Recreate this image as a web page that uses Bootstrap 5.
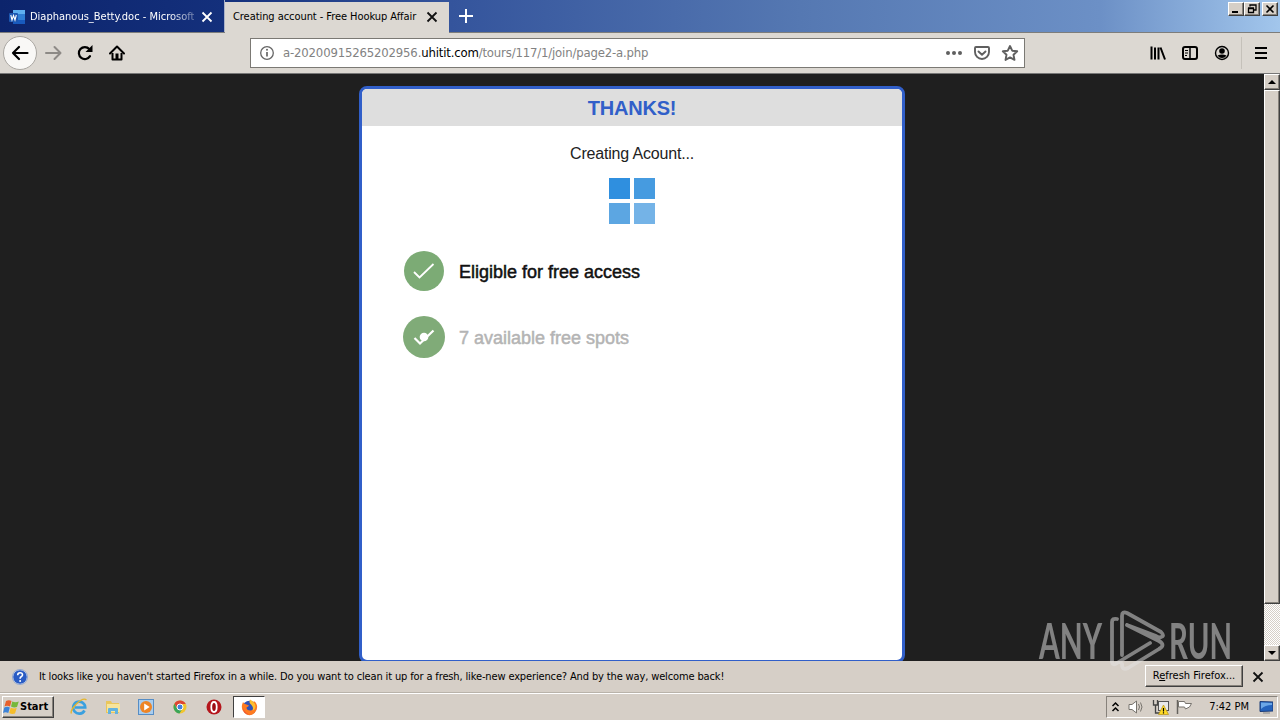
<!DOCTYPE html>
<html lang="en">
<head>
    <meta charset="UTF-8">
    <meta name="viewport" content="width=device-width, initial-scale=1.0">
    <link href="https://cdn.jsdelivr.net/npm/bootstrap@5.3.3/dist/css/bootstrap.min.css" rel="stylesheet">
    <title>Creating account - Free Hookup Affair</title>
    <style>
        body {
            width: 1280px;
            height: 720px;
            font-family: "DejaVu Sans Condensed", "DejaVu Sans", sans-serif;
            font-stretch: condensed;
            font-size: 11px;
            line-height: 14px;
            color: #000;
            background: #d6cfc7;
        }

        svg {
            display: block;
            flex: none;
        }

        /* Title bar and tabs */
        .titlebar {
            height: 33px;
            background: linear-gradient(90deg, #0c246c 0, #14307c 225px, #34549c 450px, #5578b2 800px, #6c90c6 1100px, #a2c6ec 1280px);
            border-bottom: 1px solid #7d7d7b;
        }

        .tab-word {
            width: 225px;
            padding: 2px 11px 0 9px;
            color: #fff;
            border-right: 1px solid #aab2c8;
        }

        .tab-word .tab-text {
            width: 164px;
            margin-left: 5px;
            letter-spacing: 0;
            -webkit-mask-image: linear-gradient(90deg, #000 85%, rgba(0, 0, 0, .35));
        }

        .tab-open {
            width: 224px;
            height: 31px;
            margin-top: 2px;
            margin-bottom: -1px;
            padding: 0 11px 2px 8px;
            background: #dcd8d2;
        }

        .tab-text {
            letter-spacing: -.06px;
        }

        .bevel {
            background: #d6cfc7;
            border: 1px solid;
            border-color: #fff #404040 #404040 #fff;
            box-shadow: inset -1px -1px #87827b;
        }

        .win-group {
            margin: 2px 2px 0 0;
        }

        .win-btn {
            width: 16px;
            height: 14px;
        }

        .win-close {
            margin-left: 2px;
        }

        /* Toolbar */
        .toolbar {
            height: 41px;
            background: #dcd8d2;
            border-bottom: 1px solid #777;
        }

        .back-btn {
            width: 34px;
            height: 34px;
            margin-left: 3px;
            border: 1px solid #aaa7a2;
            background: #f9f8f6;
        }

        .reload {
            margin: 0 16px 0 14px;
        }

        .urlbar {
            width: 775px;
            height: 30px;
            margin-left: 125px;
            border: 1px solid #7b7974;
            background: #fff;
            color: #828282;
            font-size: 13px;
        }

        .url-text {
            letter-spacing: -.17px;
        }

        .pocket {
            margin: 0 6px 0 7px;
        }

        .divider {
            width: 1px;
            height: 32px;
            margin-left: 3px;
            background: #c5c1ba;
        }

        /* Page */
        .page {
            background: #1f1f1f;
            font-family: "Liberation Sans", Arial, sans-serif;
        }

        .panel {
            width: 546px;
            height: 577px;
            margin-top: 12px;
            border: 3px solid #315fc9;
            border-radius: 8px;
            background: #fff;
        }

        .panel-head {
            height: 37px;
            border-radius: 5px 5px 0 0;
            background: #dedede;
            color: #315fc9;
            font-size: 20px;
            font-weight: bold;
            letter-spacing: -.2px;
        }

        .creating {
            margin-top: 18px;
            color: #222;
            font-size: 16px;
            line-height: 20px;
            letter-spacing: -.18px;
        }

        .loader {
            margin: 14px auto 0;
        }

        .steps {
            margin: 26px 0 0 41px;
            gap: 24px;
        }

        .step-text {
            margin-left: 14px;
            padding-top: 2px;
            color: #111;
            font-size: 18px;
            line-height: 22px;
            -webkit-text-stroke: .5px;
        }

        .step-pending {
            color: #b4b4b4;
        }

        .scroll {
            width: 16px;
            background: repeating-conic-gradient(#fff 0 25%, #d6cfc7 0 50%) 0 0 / 2px 2px;
        }

        .scroll-btn {
            height: 16px;
        }

        .scroll-thumb {
            height: 514px;
        }

        .watermark {
            position: absolute;
            left: 1036px;
            top: 606px;
            opacity: .5;
        }

        /* Notification bar */
        .notice {
            height: 32px;
            border-bottom: 1px solid #b9b3aa;
            padding: 0 15px 0 12px;
        }

        .notice-text {
            letter-spacing: -.137px;
        }

        .notice-msg {
            margin-left: 11px;
            padding-top: 1px;
        }

        .refresh-btn {
            width: 98px;
            height: 22px;
            margin-bottom: 2px;
        }

        /* Taskbar */
        .taskbar {
            height: 27px;
            border-top: 1px solid #fff;
        }

        .start-btn {
            width: 52px;
            height: 22px;
            margin-left: 2px;
            font-weight: bold;
        }

        .quick-icons {
            gap: 17px;
        }

        .task-active {
            width: 32px;
            height: 22px;
            margin-left: 11px;
            background: #fff;
            border: 1px solid;
            border-color: #404040 #fff #fff #404040;
        }

        .tray {
            width: 172px;
            height: 22px;
            margin-right: 2px;
            border: 1px solid;
            border-color: #87827b #fff #fff #87827b;
        }
    </style>
</head>
<body class="d-flex flex-column overflow-hidden position-relative">
    <div class="titlebar d-flex flex-shrink-0">
        <div class="tab-word d-flex align-items-center">
            <svg width="16" height="16" viewBox="0 0 16 16">
                <rect x="4" y="1" width="12" height="14" rx="1" fill="#2f7fd4"/>
                <path d="M4 1h12v4H4z" fill="#5eb0f0"/>
                <path d="M4 11h12v4H4z" fill="#185abd"/>
                <rect y="4" width="9" height="9" rx="1" fill="#1c57b0"/>
                <path d="M1.800 6l1.200 5 1.500-4.500L6 11l1.300-5" fill="none" stroke="#fff" stroke-width="1.100"/>
            </svg>
            <div class="tab-text text-nowrap overflow-hidden">Diaphanous_Betty.doc - Microsoft</div>
            <svg class="ms-auto" width="12" height="12" viewBox="0 0 12 12"><path d="M1.500 1.500l9 9M10.500 1.500l-9 9" stroke="#fff" stroke-width="1.800"/></svg>
        </div>
        <div class="tab-open d-flex align-items-center">
            <div class="tab-text text-nowrap">Creating account - Free Hookup Affair</div>
            <svg class="ms-auto" width="12" height="12" viewBox="0 0 12 12"><path d="M1.500 1.500l9 9M10.500 1.500l-9 9" stroke="#111" stroke-width="1.800"/></svg>
        </div>
        <svg class="ms-2 mt-2" width="17" height="16" viewBox="0 0 17 16"><path d="M9 1v14M2 8h14" stroke="#fff" stroke-width="2"/></svg>
        <div class="win-group d-flex ms-auto">
            <div class="win-btn bevel"><svg width="14" height="12"><path d="M3 9h6" stroke="#000" stroke-width="2"/></svg></div>
            <div class="win-btn bevel"><svg width="14" height="12"><path d="M5 3.500V2h6v5H9M3.500 5.500h5v4h-5zM3 5h6M5 2h6" fill="none" stroke="#000" stroke-width="1.300"/></svg></div>
            <div class="win-btn win-close bevel"><svg width="14" height="12"><path d="M3.500 2.500l7 7M10.500 2.500l-7 7" stroke="#000" stroke-width="1.600"/></svg></div>
        </div>
    </div>

    <div class="toolbar d-flex align-items-center flex-shrink-0">
        <div class="back-btn rounded-circle d-flex align-items-center justify-content-center">
            <svg width="18" height="16" viewBox="0 0 18 16"><path d="M16.500 8H2M8 2L2 8l6 6" fill="none" stroke="#000" stroke-width="2.200" stroke-linecap="round" stroke-linejoin="round"/></svg>
        </div>
        <svg class="ms-2" width="18" height="16" viewBox="0 0 18 16"><path d="M1 8h14M9.500 2l6 6-6 6" fill="none" stroke="#8d8a86" stroke-width="2" stroke-linecap="round" stroke-linejoin="round"/></svg>
        <svg class="reload" width="16" height="16" viewBox="0 0 16 16"><path d="M13 11.200A6 6 0 1 1 12.300 4" fill="none" stroke="#000" stroke-width="2.200" stroke-linecap="round"/><path d="M15.500 0v7H8.500z" fill="#000"/></svg>
        <svg width="16" height="16" viewBox="0 0 16 16"><path d="M1 8.500L8 1.500l7 7" fill="none" stroke="#000" stroke-width="2" stroke-linecap="round" stroke-linejoin="round"/><path d="M3.500 8v6.500h9V8" fill="none" stroke="#000" stroke-width="2" stroke-linejoin="round"/><path d="M6.500 14.500V8.500h3v6z" fill="#000"/></svg>
        <div class="urlbar d-flex align-items-center">
            <svg class="ms-2" width="16" height="16" viewBox="0 0 16 16"><circle cx="8" cy="8" r="6.300" fill="none" stroke="#666" stroke-width="1.300"/><path d="M8 7v4.500" stroke="#666" stroke-width="1.700"/><circle cx="8" cy="4.800" r="1" fill="#666"/></svg>
            <div class="url-text text-nowrap ms-2">a-20200915265202956.<span class="text-black">uhitit.com</span>/tours/117/1/join/page2-a.php</div>
            <svg class="ms-auto" width="18" height="16" viewBox="0 0 18 16" fill="#5f5f5f"><circle cx="3" cy="8" r="2"/><circle cx="9" cy="8" r="2"/><circle cx="15" cy="8" r="2"/></svg>
            <svg class="pocket" width="24" height="16" viewBox="0 0 24 16" fill="none" stroke="#5f5f5f" stroke-width="1.900" stroke-linecap="round" stroke-linejoin="round"><path d="M6 2h12q1 0 1 1v4a7 7 0 0 1-14 0V3q0-1 1-1zM8.500 6.500L12 9.800l3.500-3.300"/></svg>
            <svg class="me-1" width="20" height="18" viewBox="0 0 20 18"><path d="M10 2l2.200 4.700 5 .6-3.700 3.500 1 5.100L10 13.400l-4.500 2.500 1-5.100L2.800 7.300l5-.6z" fill="none" stroke="#5f5f5f" stroke-width="1.900" stroke-linejoin="round"/></svg>
        </div>
        <div class="d-flex align-items-center gap-3 ms-auto me-2">
            <svg width="16" height="16" viewBox="0 0 16 16"><path d="M1.500 1.500v13M5 2.500v12M8.500 2.500v12M10.500 2.500l4.500 12" stroke="#000" stroke-width="2"/></svg>
            <svg width="16" height="16" viewBox="0 0 16 16"><rect x="1" y="2" width="14" height="12" rx="2" fill="none" stroke="#000" stroke-width="2"/><path d="M8 2v12" stroke="#000" stroke-width="1.500"/><path d="M3 5.500h3M3 8h3M3 10.500h2" stroke="#000"/></svg>
            <svg width="16" height="16" viewBox="0 0 16 16"><circle cx="8" cy="8" r="6.500" fill="none" stroke="#000" stroke-width="1.400"/><circle cx="8" cy="6" r="2.800"/><path d="M3.500 10.500q4.500-2 9 0Q11 13 8 13t-4.500-2.500z"/></svg>
        </div>
        <div class="divider"></div>
        <svg class="mx-2" width="22" height="16" viewBox="0 0 22 16"><path d="M5 3h12M5 8h12M5 13h12" stroke="#000" stroke-width="2"/></svg>
    </div>

    <div class="page d-flex flex-grow-1 overflow-hidden">
        <div class="flex-grow-1 d-flex justify-content-center">
            <div class="panel flex-shrink-0">
                <div class="panel-head d-flex align-items-center justify-content-center">THANKS!</div>
                <div class="creating text-center">Creating Acount...</div>
                <svg class="loader" width="46" height="46"><path d="M0 0h21v21H0z" fill="#2f8fdf"/><path d="M25 0h21v21H25z" fill="#469be0"/><path d="M0 25h21v21H0z" fill="#5ca6e2"/><path d="M25 25h21v21H25z" fill="#74b3e7"/></svg>
                <div class="steps d-flex flex-column">
                    <div class="d-flex align-items-center">
                        <svg width="42" height="42"><circle cx="21" cy="21" r="20" fill="#7cab75"/><path d="M11 22l5.500 5.500L30.500 14" fill="none" stroke="#fff" stroke-width="1.800"/></svg>
                        <div class="step-text">Eligible for free access</div>
                    </div>
                    <div class="d-flex align-items-center">
                        <svg width="42" height="42"><circle cx="21" cy="21" r="21" fill="#80ab78"/><path d="M11.500 22l5.500 5.500L30.500 14.500" fill="none" stroke="#fff" stroke-width="2.200"/><circle cx="21" cy="21" r="4.300" fill="#fff"/></svg>
                        <div class="step-text step-pending">7 available free spots</div>
                    </div>
                </div>
            </div>
        </div>
        <div class="scroll d-flex flex-column">
            <div class="scroll-btn bevel"><svg width="14" height="14"><path d="M3 9h8L7 5z"/></svg></div>
            <div class="scroll-thumb bevel"></div>
            <div class="scroll-btn bevel mt-auto"><svg width="14" height="14"><path d="M3 5h8L7 9z"/></svg></div>
        </div>
    </div>

    <div class="notice d-flex align-items-center flex-shrink-0">
        <svg width="16" height="16" viewBox="0 0 16 16"><circle cx="8" cy="8" r="7.300" fill="#2a5cc4" stroke="#dfe8f8"/><circle cx="8" cy="8" r="7.600" fill="none" stroke="#7d94bf" stroke-width=".7"/><path d="M5.700 6.200q0-2.500 2.400-2.500t2.400 2.200q0 1-1.400 1.900-1 .6-1 1.900" fill="none" stroke="#fff" stroke-width="1.600"/><circle cx="8.100" cy="11.900" r="1" fill="#fff"/></svg>
        <div class="notice-text notice-msg text-nowrap">It looks like you haven't started Firefox in a while. Do you want to clean it up for a fresh, like-new experience? And by the way, welcome back!</div>
        <div class="refresh-btn bevel ms-auto d-flex align-items-center justify-content-center"><span>R<u>e</u>fresh Firefox...</span></div>
        <svg class="ms-2" width="14" height="12" viewBox="0 0 14 12"><path d="M2.500 1.500l9 9M11.500 1.500l-9 9" stroke="#111" stroke-width="1.800"/></svg>
    </div>

    <div class="taskbar d-flex align-items-center flex-shrink-0">
        <div class="start-btn bevel d-flex align-items-center">
            <svg width="17" height="16" viewBox="0 0 17 16"><path d="M3 2q3-1.500 5.500 0L7 7.500q-3-1.500-5.500 0z" fill="#e8602c"/><path d="M9.300 2.500q3 1.500 6.500 0L14 8q-3 1-6-.5z" fill="#76b83c"/><path d="M1.300 8.500q3-1.300 5.500 0L5.300 14q-2.800-1.300-5.300 0z" fill="#3d83d8"/><path d="M7.700 8.800q3 1.300 6 .3L12 14.500q-3 1-5.800-.5z" fill="#f5bd2c"/></svg>
            <span>Start</span>
        </div>
        <div class="quick-icons d-flex align-items-center ms-3">
            <svg width="18" height="18" viewBox="0 0 18 18"><path d="M14.500 12.500A6 6 0 1 1 15.200 9.500H5" fill="none" stroke="#3aa0df" stroke-width="2.700"/><path d="M1.500 15.500C-1 12 12-2 16.500 2" fill="none" stroke="#e5b52c" stroke-width="1.300"/></svg>
            <svg width="16" height="18" viewBox="0 0 16 18"><path d="M1 3h5l1 2h7v10H1z" fill="#e9c65c"/><path d="M2 6h13v8H2z" fill="#f6e49b"/><path d="M3 16v-5q0-1 1-1h8q1 0 1 1v5h-3v-3H6v3z" fill="#63b3df"/></svg>
            <svg width="16" height="18" viewBox="0 0 16 18"><rect x=".5" y="1.500" width="15" height="15" fill="#a9cdee" stroke="#568dc5"/><circle cx="8" cy="9" r="6" fill="#ee8526"/><path d="M6.200 5.500v7l5.500-3.500z" fill="#fff"/></svg>
            <svg width="18" height="18" viewBox="0 0 18 18"><circle cx="9" cy="9" r="6.500" fill="#f2c52d"/><path d="M3.400 5.700A6.500 6.500 0 0 1 14.800 6H9L6 10.500z" fill="#dd4634"/><path d="M3.400 5.700A6.500 6.500 0 0 0 8.500 15.500l3-5H6z" fill="#3ba558"/><circle cx="9" cy="9" r="3" fill="#4281dd" stroke="#fff"/></svg>
            <svg width="16" height="18" viewBox="0 0 16 18"><circle cx="8" cy="9" r="7.500" fill="#b5161c"/><ellipse cx="8" cy="9" rx="2.700" ry="5" fill="#9c0b12" stroke="#fff" stroke-width="1.800"/></svg>
        </div>
        <div class="task-active d-flex align-items-center justify-content-center">
            <svg width="17" height="17" viewBox="0 0 17 17"><circle cx="8.500" cy="8.800" r="7" fill="#3153b7"/><path d="M2 3q-3 7 1.500 11 5 4.500 10 0 4-4.500 2-9-1-2.500-3-3 1 3 0 5 1 4-3 4.500-4 0-4-3 2-1 2.500-2L5.500 5.500Q3 5 2 3z" fill="#ff7b20"/><path d="M9 .500q-1.500 3 1 5 3 3 1.500 6 3-1 3-4 0-4-5.500-7z" fill="#ffbf2d"/><path d="M2 9q1 7 8 6.500-6-.500-8-6.500z" fill="#ec3f3f"/></svg>
        </div>
        <div class="tray ms-auto d-flex align-items-center">
            <svg class="ms-1" width="9" height="12" viewBox="0 0 9 12"><path d="M1.500 5l3-3 3 3M1.500 10l3-3 3 3" fill="none" stroke="#000" stroke-width="1.500"/></svg>
            <svg class="ms-2" width="18" height="16" viewBox="0 0 18 16"><path d="M1 5.500h3L8.500 2v12L4 10.500H1z" fill="#fff" stroke="#77736d"/><path d="M10.500 5q2 3 0 6M12.500 3.500q3 4.500 0 9" fill="none" stroke="#77736d"/></svg>
            <svg class="ms-1" width="20" height="16" viewBox="0 0 20 16"><rect x="8.500" y="2.500" width="10" height="9" fill="#e9e9e9" stroke="#555"/><path d="M3.500 1v5h4V1M5.500 6v8h5" fill="none" stroke="#444" stroke-width="1.300"/><path d="M13.500 6l5 9.500h-10z" fill="#ffdb26" stroke="#b69217" stroke-width=".7"/><path d="M13.500 9v3.500M13.500 13.300v1.200" stroke="#000" stroke-width="1.200"/></svg>
            <svg class="ms-1" width="20" height="16" viewBox="0 0 20 16"><path d="M3.500 1v14" stroke="#65625d" stroke-width="1.500"/><path d="M4.500 2.500h6l1 2h6l-2 3.500-4 2-1-2h-6z" fill="#fff" stroke="#77736d"/></svg>
            <span class="ms-auto text-nowrap">7:42 PM</span>
            <svg class="ms-1 me-1" width="20" height="14" viewBox="0 0 20 14"><path d="M7 1.500L20 2v9L7 11.500z" fill="#2463bd" stroke="#1d3c77"/><path d="M8 2.500l11 .4v2Q12 5 8 9z" fill="#6ba7e7"/><path d="M10 13h7" stroke="#888"/></svg>
        </div>
    </div>

    <svg class="watermark" width="242" height="72" viewBox="0 0 242 72">
        <g fill="#e4e4e4" font-family="Lato, sans-serif" font-weight="bold" font-size="50">
            <text x="3" y="53" textLength="63" lengthAdjust="spacingAndGlyphs">ANY</text>
            <text x="133" y="53" textLength="63" lengthAdjust="spacingAndGlyphs">RUN</text>
        </g>
        <path d="M81 13q-5-1-5 3v40q1 4 5 1l33-20M86 49V10q0-5 5-3l34 19q4 4 0 5-2 1-5-1L91 19M91 19l32 16q7 4 0 8L92 62q-6 3-6-4" fill="none" stroke="#e4e4e4" stroke-width="3.800" stroke-linejoin="round" stroke-linecap="round"/>
    </svg>
    <script src="https://cdn.jsdelivr.net/npm/bootstrap@5.3.3/dist/js/bootstrap.bundle.min.js"></script>
</body>
</html>
